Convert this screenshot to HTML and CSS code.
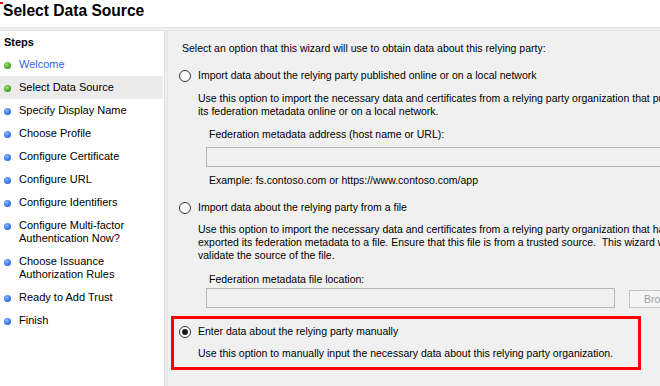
FILE: index.html
```html
<!DOCTYPE html>
<html>
  <head>
    <meta name="viewport" content="width=device-width, initial-scale=1">
    <title>Select Data Source</title>
    <link rel="stylesheet" href="styles.css">
  </head>
<body>
  <div class="header">
    <div class="title">Select Data Source</div>
  </div>

  <div class="layout">

    <div class="steps">
      <div class="stepshead">Steps</div>
      <div class="step done link"><span class="dot green"></span>Welcome</div>
      <div class="step current"><span class="dot green"></span>Select Data Source</div>
      <div class="step"><span class="dot"></span>Specify Display Name</div>
      <div class="step"><span class="dot"></span>Choose Profile</div>
      <div class="step"><span class="dot"></span>Configure Certificate</div>
      <div class="step"><span class="dot"></span>Configure URL</div>
      <div class="step"><span class="dot"></span>Configure Identifiers</div>
      <div class="step"><span class="dot"></span>Configure Multi-factor<br>Authentication Now?</div>
      <div class="step"><span class="dot"></span>Choose Issuance<br>Authorization Rules</div>
      <div class="step"><span class="dot"></span>Ready to Add Trust</div>
      <div class="step"><span class="dot"></span>Finish</div>
    </div>

    <div class="main">
      <div class="intro">Select an option that this wizard will use to obtain data about this relying party:</div>

      <div class="option first">
        <div class="radiorow"><span class="radio"></span>Import data about the relying party published online or on a local network</div>
        <div class="desc">Use this option to import the necessary data and certificates from a relying party organization that publishes<br>its federation metadata online or on a local network.</div>
        <div class="fieldlabel">Federation metadata address (host name or URL):</div>
        <div class="field wide"></div>
        <div class="example">Example: fs.contoso.com or https://www.contoso.com/app</div>
      </div>

      <div class="option second">
        <div class="radiorow"><span class="radio"></span>Import data about the relying party from a file</div>
        <div class="desc">Use this option to import the necessary data and certificates from a relying party organization that has<br>exported its federation metadata to a file. Ensure that this file is from a trusted source.&nbsp; This wizard will not<br>validate the source of the file.</div>
        <div class="fieldlabel filelabel">Federation metadata file location:</div>
        <div class="filerow">
          <div class="field short"></div>
          <div class="browse">Browse...</div>
        </div>
      </div>

      <div class="highlight">
        <div class="radiorow"><span class="radio checked"></span>Enter data about the relying party manually</div>
        <div class="desc">Use this option to manually input the necessary data about this relying party organization.</div>
      </div>
    </div>

  </div>
</body>
</html>
```

FILE: styles.css
```css
body, html {margin: 0; padding: 0; background-color: #f0f0f0; overflow: hidden;}

body {
  width: 660px;
  height: 386px;
  font-family: 'Liberation Sans', Arial, sans-serif;
  font-size: 11px;
  line-height: 13px;
  color: #000;
}

.header {
  position: relative;
  height: 27px;
  background-color: #fff;
  border-bottom: 1px solid #e3e3e3;
}

.header::before {
  content: '';
  position: absolute;
  left: 0;
  top: 2px;
  width: 3px;
  height: 2px;
  background-color: #e00;
}

.title {
  padding: 2px 0 0 3px;
  font-size: 15.6px;
  line-height: 18px;
  font-weight: bold;
}

.layout {
  display: flex;
  margin-top: 2px;
  height: 356px;
}

.steps {
  width: 164px;
  flex-shrink: 0;
  background-color: #fff;
  border-top: 1px solid #e3e3e3;
  border-right: 1px solid #dedede;
}

.stepshead {
  height: 22px;
  padding-left: 4px;
  line-height: 22px;
  font-weight: bold;
}

.step {
  display: flex;
  align-items: flex-start;
  padding: 5px 0 5px 19px;
  position: relative;
}

.step.current {
  background-color: #ebebeb;
  margin-right: 1px;
}

.link {
  color: #3066e8;
}

.dot {
  position: absolute;
  left: 4px;
  top: 9px;
  width: 7px;
  height: 7px;
  border-radius: 50%;
  background: radial-gradient(circle at 40% 35%, #8fb8ff 0, #3a78e6 55%, #2456b8 100%);
}

.dot.green {
  background: radial-gradient(circle at 40% 35%, #a8e27a 0, #4aad25 55%, #2f7d14 100%);
}

.main {
  flex: 1;
  margin-left: 2px;
  border-left: 1px solid #e3e3e3;
  border-top: 1px solid #e3e3e3;
  padding-top: 11px;
  font-size: 10.5px;
  white-space: nowrap;
  overflow: hidden;
}

.intro {
  padding-left: 14px;
}

.option {
  padding-left: 11px;
}

.option.first {
  margin-top: 14px;
}

.option.second {
  margin-top: 14px;
}

.radiorow {
  display: flex;
  align-items: center;
  gap: 7px;
}

.radio {
  box-sizing: border-box;
  width: 12px;
  height: 12px;
  border: 1px solid #333;
  border-radius: 50%;
  background-color: #fff;
  display: flex;
  align-items: center;
  justify-content: center;
}

.radio.checked::after {
  content: '';
  width: 6px;
  height: 6px;
  border-radius: 50%;
  background-color: #1a1a1a;
}

.desc {
  margin-top: 10px;
  padding-left: 19px;
}

.option.second .desc {
  margin-top: 9px;
}

.fieldlabel {
  margin-top: 10px;
  padding-left: 30px;
}

.filelabel {
  margin-top: 11px;
}

.field {
  box-sizing: border-box;
  height: 20px;
  margin-top: 6px;
  margin-left: 27px;
  border: 1px solid #b4b4b4;
  background-color: #f0f0f0;
}

.field.wide {
  width: 520px;
}

.example {
  margin-top: 7px;
  padding-left: 30px;
}

.filerow {
  display: flex;
  gap: 14px;
  align-items: flex-start;
}

.filerow .field {
  margin-top: 2px;
}

.field.short {
  width: 409px;
  flex-shrink: 0;
}

.browse {
  box-sizing: border-box;
  width: 75px;
  height: 18px;
  margin-top: 4px;
  flex-shrink: 0;
  padding-left: 14px;
  line-height: 16px;
  border: 1px solid #c4c4c4;
  background-color: #f4f4f4;
  color: #a0a0a0;
}

.highlight {
  box-sizing: border-box;
  width: 470px;
  height: 54px;
  margin: 8px 0 0 3px;
  padding: 6px 0 0 5px;
  border: 3px solid #ff0000;
}

.highlight .desc {
  margin-top: 9px;
}
```
